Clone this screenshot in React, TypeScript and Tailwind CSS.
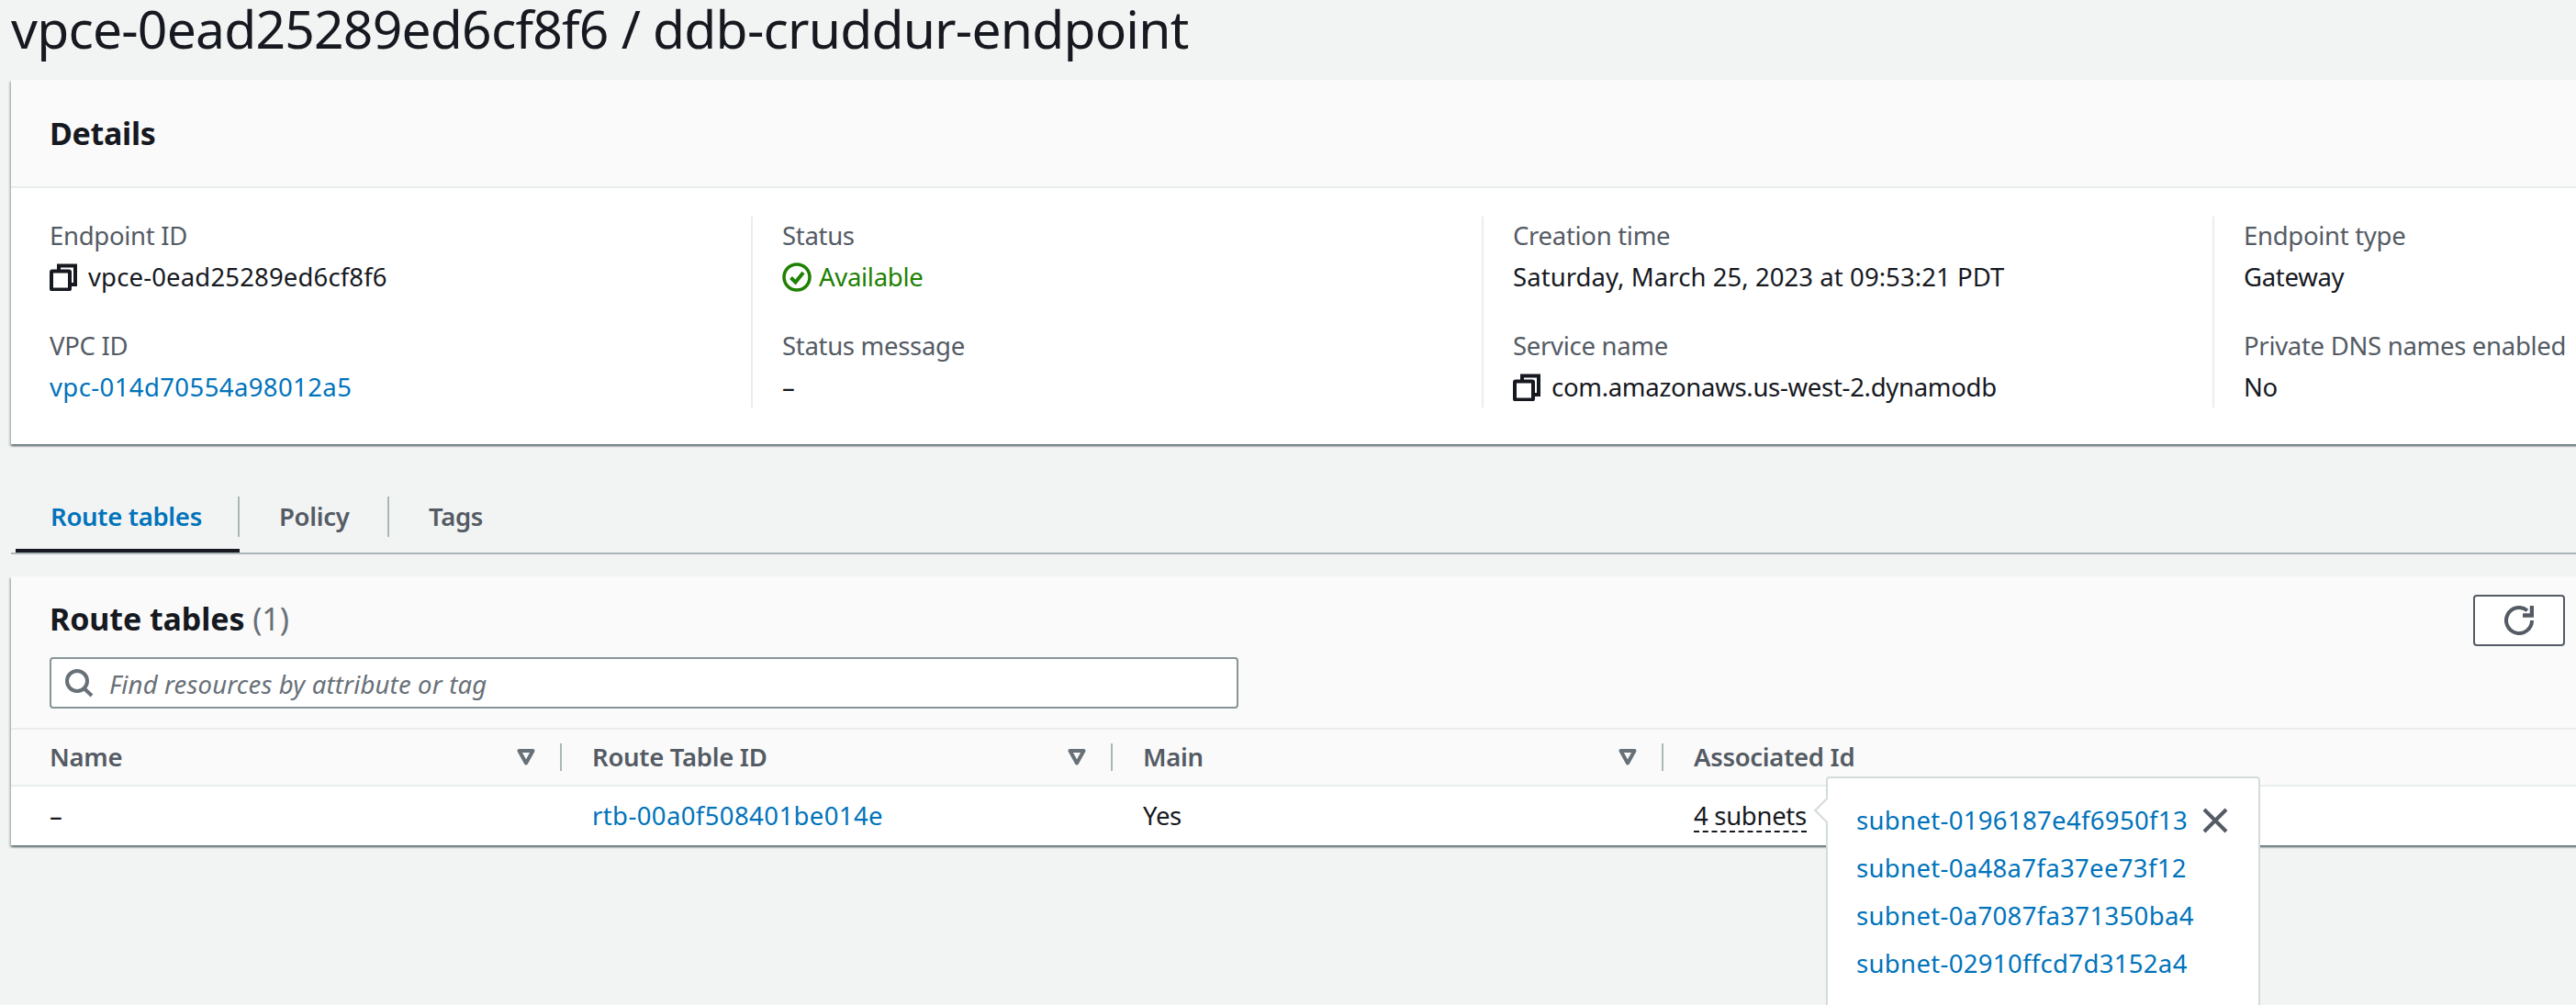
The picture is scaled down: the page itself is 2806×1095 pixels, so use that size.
import React from 'react';

const cardShadow = 'shadow-[0_2px_2px_0_rgba(0,28,36,0.5),2px_2px_2px_0_rgba(0,28,36,0.1),-2px_2px_2px_0_rgba(0,28,36,0.15)]';

const CopyIcon = () => (
  <svg width="30" height="30" viewBox="0 0 30 30" fill="none" stroke="#16191f" strokeWidth="4" className="shrink-0">
    <path d="M10 8V2.5h18V23h-6" />
    <rect x="2" y="8.5" width="20" height="20" rx="1" />
  </svg>
);

const StatusIcon = () => (
  <svg width="32" height="32" viewBox="0 0 32 32" fill="none" stroke="#1d8102" strokeWidth="3.5" className="shrink-0">
    <circle cx="16" cy="16" r="14" />
    <path d="M9.5 16.5l5 5 8.5-10.5" strokeWidth="4" />
  </svg>
);

const FilterIcon = () => (
  <svg width="20" height="18" viewBox="0 0 20 18" fill="none" stroke="#687078" strokeWidth="4" className="shrink-0">
    <path d="M2.5 2h15L10 15.5z" strokeLinejoin="round" />
  </svg>
);

const SearchIcon = () => (
  <svg width="32" height="32" viewBox="0 0 32 32" fill="none" stroke="#687078" strokeWidth="4" className="shrink-0">
    <circle cx="14" cy="14" r="11" />
    <path d="M21.5 22L30 30" />
  </svg>
);

const RefreshIcon = () => (
  <svg width="32" height="32" viewBox="0 0 32 32" fill="none" stroke="#545b64" strokeWidth="4">
    <path d="M30 16a14 14 0 1 1-5-10.7" />
    <path d="M20 10.5h10V0" strokeWidth="4.5" />
  </svg>
);

const CloseIcon = () => (
  <svg width="30" height="30" viewBox="0 0 30 30" fill="none" stroke="#545b64" strokeWidth="4">
    <path d="M3 3l24 24M27 3L3 27" />
  </svg>
);

const Label = ({ children }: { children: React.ReactNode }) => (
  <div className="h-11 leading-[42px] text-[#545b64]">{children}</div>
);

const Value = ({ children, className = 'text-[#16191f]' }: { children: React.ReactNode; className?: string }) => (
  <div className={`flex h-11 items-center gap-3 leading-[44px] ${className}`}>{children}</div>
);

const detailColumns = [
  {
    top: ['Endpoint ID', <Value key="v"><CopyIcon /><span className="tracking-[0.15px]">vpce-0ead25289ed6cf8f6</span></Value>],
    bottom: ['VPC ID', <Value key="v" className="tracking-[0.4px] text-[#0073bb]">vpc-014d70554a98012a5</Value>],
  },
  {
    top: ['Status', <Value key="v" className="text-[#1d8102]"><StatusIcon /><span className="-ml-1">Available</span></Value>],
    bottom: ['Status message', <Value key="v">–</Value>],
  },
  {
    top: ['Creation time', <Value key="v"><span className="tracking-[0.07px]">Saturday, March 25, 2023 at 09:53:21 PDT</span></Value>],
    bottom: ['Service name', <Value key="v"><CopyIcon /><span>com.amazonaws.us-west-2.dynamodb</span></Value>],
  },
  {
    top: ['Endpoint type', <Value key="v">Gateway</Value>],
    bottom: ['Private DNS names enabled', <Value key="v">No</Value>],
  },
];

const headers = ['Name', 'Route Table ID', 'Main'];
const subnets = ['subnet-0196187e4f6950f13', 'subnet-0a48a7fa37ee73f12', 'subnet-0a7087fa371350ba4', 'subnet-02910ffcd7d3152a4'];

export default function App() {
  return (
    <div className="h-[1095px] w-[2806px] overflow-hidden bg-[#f2f3f3] font-['Noto_Sans',sans-serif] text-[27.5px] tracking-[-0.3px] text-[#16191f]">
      <h1 className="h-[87px] pl-3 text-[57px] leading-[62px] font-normal tracking-[-0.8px]">vpce-0ead25289ed6cf8f6 / ddb-cruddur-endpoint</h1>

      <section className={`ml-3 w-[2806px] bg-white ${cardShadow}`}>
        <div className="flex h-[118px] items-center border-b-2 border-[#eaeded] bg-[#fafafa] pl-[42px]">
          <h2 className="text-[34px] font-bold">Details</h2>
        </div>
        <div className="flex pt-[31px] pb-10">
          {detailColumns.map((col, idx) => (
            <div key={idx} className={idx === 0 ? 'w-[806px] shrink-0 pl-[42px]' : 'w-[796px] shrink-0 border-l-2 border-[#eaeded] pl-8'}>
              <Label>{col.top[0]}</Label>
              {col.top[1]}
              <div className="h-8" />
              <Label>{col.bottom[0]}</Label>
              {col.bottom[1]}
            </div>
          ))}
        </div>
      </section>

      <nav className="mt-[57px] ml-3 flex h-[63px] items-start border-b-2 border-[#aab7b8] pl-[5px] text-[27.5px] font-semibold text-[#545b64]">
        <div className="flex h-[61px] w-[244px] items-start border-b-4 border-[#16191f]">
          <span className="flex h-11 w-full items-center border-r-2 border-[#aab7b8] pl-[38px] text-[#0073bb]">Route tables</span>
        </div>
        <span className="flex h-11 w-[163px] items-center border-r-2 border-[#aab7b8] pl-[43px]">Policy</span>
        <span className="flex h-11 items-center pl-[43px]">Tags</span>
      </nav>

      <section className={`relative mt-6 ml-3 w-[2806px] bg-white ${cardShadow}`}>
        <div className="h-[167px] border-b-2 border-[#eaeded] bg-[#fafafa] pt-[20px] pl-[42px]">
          <div className="flex h-[52px] w-[2740px] items-start justify-between">
            <h2 className="text-[34px] leading-[52px] font-bold tracking-[-0.1px]">Route tables <span className="font-normal text-[#687078]">(1)</span></h2>
            <button className="flex h-14 w-[100px] items-center justify-center rounded border-2 border-[#545b64] bg-white">
              <RefreshIcon />
            </button>
          </div>
          <div className="mt-4 flex h-14 w-[1295px] items-center gap-[17px] rounded border-2 border-[#879596] bg-white pl-[14px]">
            <SearchIcon />
            <span className="pt-[3px] tracking-[0.17px] text-[#687078] italic">Find resources by attribute or tag</span>
          </div>
        </div>

        <div className="flex h-[62px] border-b-2 border-[#eaeded] bg-[#fafafa] font-semibold text-[#545b64]">
          {headers.map((h, idx) => (
            <div key={h} className={`flex w-[600px] shrink-0 items-center ${idx === 0 ? 'pl-[42px]' : 'pl-[33px]'}`}>
              <span className="flex-1">{h}</span>
              <FilterIcon />
              <div className="ml-[27px] h-[30px] border-r-2 border-[#aab7b8]" />
            </div>
          ))}
          <div className="flex items-center pl-[33px]">Associated Id</div>
        </div>

        <div className="flex h-16 items-center">
          <div className="w-[600px] shrink-0 pl-[42px]">–</div>
          <div className="w-[600px] shrink-0 pl-[33px] tracking-[0.4px] text-[#0073bb]">rtb-00a0f508401be014e</div>
          <div className="w-[600px] shrink-0 pl-[33px]">Yes</div>
          <div className="pl-[33px]">
            <span className="inline-block border-b-2 border-dashed border-[#16191f] leading-[32px]">4 subnets</span>
          </div>
        </div>

        <div className="absolute top-[218px] left-[1977px] z-10 h-[400px] w-[473px] rounded border-2 border-[#d5dbdb] bg-white pt-[20px] pl-[31px] tracking-[0.33px] text-[#0073bb]">
          <div className="absolute top-[25px] -left-[11px] size-5 rotate-45 border-b-2 border-l-2 border-[#d5dbdb] bg-white" />
          <div className="absolute top-[31px] right-[32px]"><CloseIcon /></div>
          {subnets.map((s) => (
            <div key={s} className="h-[52px] leading-[52px]">{s}</div>
          ))}
        </div>
      </section>
    </div>
  );
}
